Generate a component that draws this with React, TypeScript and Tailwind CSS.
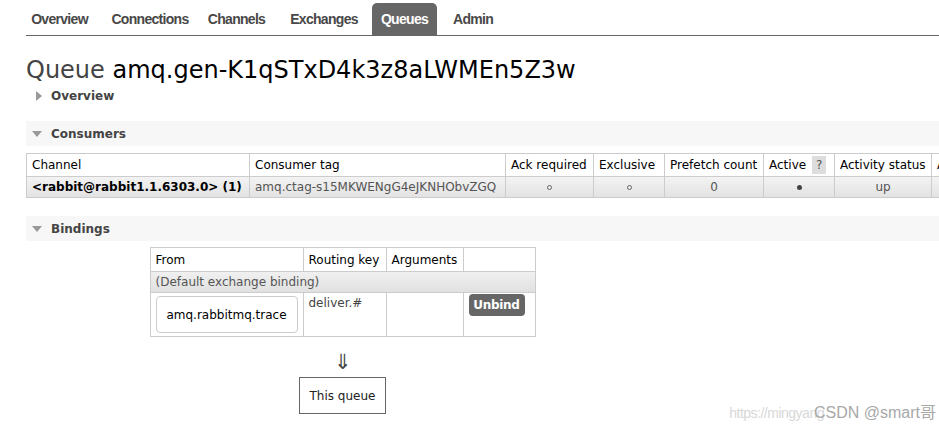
import React from 'react';

const body = '"DejaVu Sans", Verdana, sans-serif';
const navFont = '"Liberation Sans", Arial, sans-serif';

// tab boxes: [label, width, gap before]
const tabs: [string, number, number][] = [
  ['Overview', 75, 0],
  ['Connections', 90, 8],
  ['Channels', 71, 6],
  ['Exchanges', 82, 11],
  ['Queues', 65, 7],
  ['Admin', 58, 7],
];

const consumerCols = [
  { label: 'Channel', w: 223 },
  { label: 'Consumer tag', w: 256 },
  { label: 'Ack required', w: 88 },
  { label: 'Exclusive', w: 71 },
  { label: 'Prefetch count', w: 99 },
  { label: 'Active', w: 71, help: true },
  { label: 'Activity status', w: 97 },
  { label: 'Arguments', w: 100 },
];

function SectionHeader({ title }: { title: string }) {
  return (
    <div className="flex items-center h-[25px] bg-[#f7f7f7] pl-[6px]">
      <span className="w-0 h-0 border-l-[5px] border-r-[5px] border-t-[6px] border-l-transparent border-r-transparent border-t-[#999] mr-[9px]" />
      <span className="text-[12px] font-bold text-[#444]">{title}</span>
    </div>
  );
}

const Ring = () => <span className="inline-block w-[5px] h-[5px] rounded-full border border-[#666] align-middle" />;
const Dot = () => <span className="inline-block w-[5px] h-[5px] rounded-full bg-[#444] align-middle" />;

export default function App() {
  return (
    <div className="w-[939px] h-[430px] overflow-hidden bg-white relative" style={{ fontFamily: body }}>
      {/* top navigation */}
      <div className="ml-[26px] mt-[3px] border-b border-[#666] h-[33px] flex items-end">
        <div className="flex -ml-[4px]" style={{ fontFamily: navFont }}>
          {tabs.map(([t, w, gap]) => (
            <div
              key={t}
              style={{ width: w, marginLeft: gap }}
              className={
                'h-[32px] flex items-center justify-center text-[14px] font-bold tracking-[-0.7px] rounded-t-[5px] ' +
                (t === 'Queues' ? 'bg-[#666] text-white' : 'text-[#484848]')
              }
            >
              {t}
            </div>
          ))}
        </div>
      </div>

      <div className="pl-[26px]">
        <h1 className="mt-[19px] text-[24px] leading-[30px] font-normal text-black">
          <span className="text-[#444]">Queue</span> amq.gen-K1qSTxD4k3z8aLWMEn5Z3w
        </h1>

        <div className="flex items-center h-[20px] mt-[1px] pl-[10px]">
          <span className="w-0 h-0 border-t-[5px] border-b-[5px] border-l-[6px] border-t-transparent border-b-transparent border-l-[#999] mr-[9px]" />
          <span className="text-[12px] font-bold text-[#444]">Overview</span>
        </div>

        <div className="mt-[15px]">
          <SectionHeader title="Consumers" />
        </div>

        {/* consumers */}
        <table className="mt-[7px] border-collapse table-fixed text-[12px] text-black" style={{ width: 1005 }}>
          <colgroup>
            {consumerCols.map((c) => (
              <col key={c.label} style={{ width: c.w }} />
            ))}
          </colgroup>
          <thead>
            <tr className="h-[23px]">
              {consumerCols.map((c) => (
                <th key={c.label} className="border border-[#ccc] font-normal text-left px-[5px] whitespace-nowrap overflow-hidden">
                  {c.label}
                  {c.help && (
                    <span className="ml-[6px] inline-flex items-center justify-center w-[14px] h-[18px] align-middle bg-[#ddd] text-[#555]">?</span>
                  )}
                </th>
              ))}
            </tr>
          </thead>
          <tbody>
            <tr className="h-[21px] bg-gradient-to-b from-[#f3f3f3] to-[#e2e2e2]">
              <td className="border border-[#ccc] px-[5px] font-bold whitespace-nowrap">&lt;rabbit@rabbit1.1.6303.0&gt; (1)</td>
              <td className="border border-[#ccc] px-[5px] text-[#555] whitespace-nowrap overflow-hidden">amq.ctag-s15MKWENgG4eJKNHObvZGQ</td>
              <td className="border border-[#ccc] text-center"><Ring /></td>
              <td className="border border-[#ccc] text-center"><Ring /></td>
              <td className="border border-[#ccc] text-center text-[#555]">0</td>
              <td className="border border-[#ccc] text-center"><Dot /></td>
              <td className="border border-[#ccc] text-center text-[#555]">up</td>
              <td className="border border-[#ccc]" />
            </tr>
          </tbody>
        </table>

        <div className="mt-[18px]">
          <SectionHeader title="Bindings" />
        </div>

        {/* bindings */}
        <div className="ml-[124px] mt-[6px] w-[385px] flex flex-col items-center">
          <table className="border-collapse table-fixed text-[12px] text-black w-[385px]">
            <colgroup>
              <col style={{ width: 153 }} />
              <col style={{ width: 83 }} />
              <col style={{ width: 77 }} />
              <col style={{ width: 72 }} />
            </colgroup>
            <thead>
              <tr className="h-[24px]">
                <th className="border border-[#ccc] font-normal text-left px-[5px]">From</th>
                <th className="border border-[#ccc] font-normal text-left px-[5px] whitespace-nowrap">Routing key</th>
                <th className="border border-[#ccc] font-normal text-left px-[5px]">Arguments</th>
                <th className="border border-[#ccc]" />
              </tr>
            </thead>
            <tbody>
              <tr className="h-[21px] bg-gradient-to-b from-[#f0f0f0] to-[#e0e0e0]">
                <td colSpan={4} className="border border-[#ccc] px-[5px] text-[#555]">(Default exchange binding)</td>
              </tr>
              <tr className="h-[44px]">
                <td className="border border-[#ccc] px-[5px] py-[2px]">
                  <div className="h-[37px] border border-[#ccc] rounded-[4px] flex items-center justify-center">
                    amq.rabbitmq.trace
                  </div>
                </td>
                <td className="border border-[#ccc] px-[5px] pt-[1px] align-top text-[#444]">deliver.#</td>
                <td className="border border-[#ccc]" />
                <td className="border border-[#ccc] px-[5px] align-top pt-[1px]">
                  <span className="flex items-center justify-center w-[56px] h-[22px] bg-[#666] text-white font-bold text-[12px] tracking-[-0.3px] rounded-[4px]">
                    Unbind
                  </span>
                </td>
              </tr>
            </tbody>
          </table>

          <div className="mt-[13px] text-[21px] leading-[24px] text-[#444]">⇓</div>
          <div className="mt-[3px] w-[87px] h-[37px] border border-[#666] flex items-center justify-center text-[12px] text-[#222]">
            This queue
          </div>
        </div>
      </div>

      {/* watermark */}
      <div className="absolute right-[3px] bottom-[7px] h-[20px] flex items-center" style={{ fontFamily: '"Liberation Sans", "Noto Sans CJK SC", sans-serif' }}>
        <span className="text-[14px] text-[#d8d8d8] tracking-[-0.5px]">https://mingyang</span>
        <span className="text-[16px] text-[#a8a8a8] -ml-[10px]">CSDN @smart哥</span>
      </div>
    </div>
  );
}
